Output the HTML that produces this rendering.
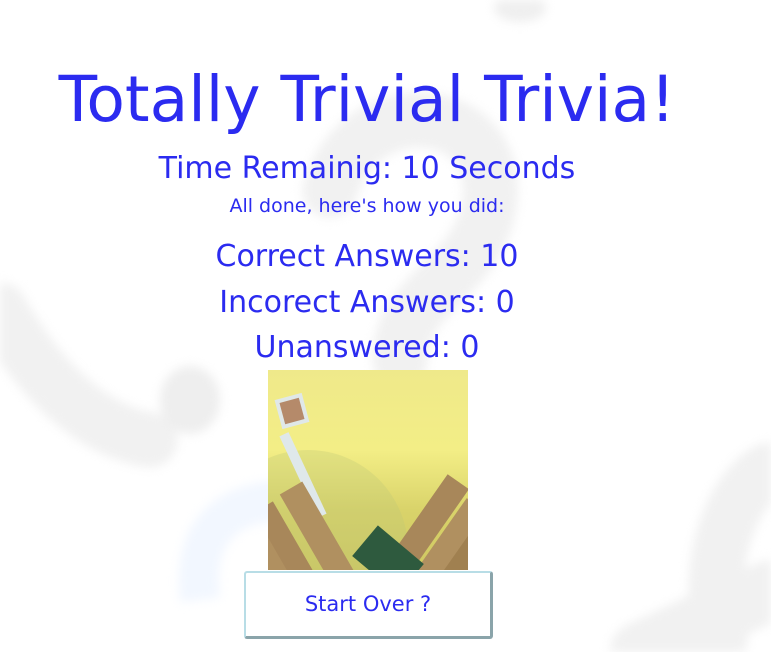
<!DOCTYPE html>
<html><head><meta charset="utf-8"><style>
html,body{margin:0;padding:0;width:771px;height:652px;overflow:hidden;background:#fff;position:relative;font-family:"DejaVu Sans",sans-serif;color:#2b2bf0}
.bg{position:absolute;filter:blur(5px);}
.t{position:absolute;left:0;width:734px;text-align:center;white-space:nowrap}
</style></head><body>
<svg class="bg" style="left:0;top:0" width="771" height="652" viewBox="0 0 771 652">
 <g fill="none" stroke="#f1f1f1" stroke-width="55" stroke-linecap="round">
  <path d="M330 190 C360 90 500 100 490 200 C480 280 400 290 400 360"/>
  <path d="M0 310 C40 380 90 430 150 440"/>
  <path d="M720 640 C700 520 760 470 771 470"/>
  <path d="M640 652 L771 590" stroke-width="60"/>
 </g>
 <g fill="none" stroke="#f2f7ff" stroke-width="40"><path d="M200 600 C190 520 240 500 290 500"/></g>
 <ellipse cx="190" cy="400" rx="30" ry="34" fill="#eeeeee"/>
 <ellipse cx="520" cy="8" rx="26" ry="14" fill="#efefef"/>
</svg>
<div class="t" style="top:63px;font-size:63px">Totally Trivial Trivia!</div>
<div class="t" style="top:151px;font-size:30px">Time Remainig: 10 Seconds</div>
<div class="t" style="top:195px;font-size:19px">All done, here's how you did:</div>
<div class="t" style="top:239px;font-size:30px">Correct Answers: 10</div>
<div class="t" style="top:285px;font-size:30px">Incorect Answers: 0</div>
<div class="t" style="top:330px;font-size:30px">Unanswered: 0</div>
<div style="position:absolute;left:268px;top:370px;width:200px;height:200px;overflow:hidden;background:linear-gradient(180deg,#efe98a 0%,#f3ee86 40%,#d9d36a 70%,#cfc862 100%)">
 <div style="position:absolute;left:-60px;top:80px;width:200px;height:200px;border-radius:50%;background:rgba(190,200,120,.3)"></div>
 <div style="position:absolute;left:14px;top:30px;width:20px;height:22px;background:#b58a6a;transform:rotate(-15deg);box-shadow:0 0 0 4px #e0e8e8"></div>
 <div style="position:absolute;left:30px;top:60px;width:10px;height:90px;background:#dfe8ea;transform:rotate(-25deg)"></div>
 <div style="position:absolute;left:40px;top:110px;width:26px;height:120px;background:#b09060;transform:rotate(-30deg)"></div>
 <div style="position:absolute;left:10px;top:130px;width:24px;height:110px;background:#a8875a;transform:rotate(-30deg)"></div>
 <div style="position:absolute;left:-10px;top:150px;width:24px;height:90px;background:#b09060;transform:rotate(-30deg)"></div>
 <div style="position:absolute;left:140px;top:100px;width:26px;height:130px;background:#a8875a;transform:rotate(35deg)"></div>
 <div style="position:absolute;left:165px;top:125px;width:24px;height:110px;background:#b09060;transform:rotate(35deg)"></div>
 <div style="position:absolute;left:182px;top:150px;width:22px;height:90px;background:#a08050;transform:rotate(35deg)"></div>
 <div style="position:absolute;left:90px;top:170px;width:60px;height:40px;background:#2e5a3e;transform:rotate(40deg)"></div>
</div>
<div style="position:absolute;left:244px;top:571px;width:244px;height:63px;border:2px solid #b8dde6;border-right-color:#8aa4aa;border-bottom-color:#8aa4aa;border-right-width:3px;border-bottom-width:3px;border-radius:3px;background:rgba(255,255,255,.85);text-align:center;line-height:63px;font-size:21px;">Start Over ?</div>
</body></html>
